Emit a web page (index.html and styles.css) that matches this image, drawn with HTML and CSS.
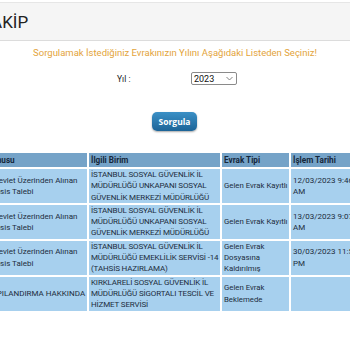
FILE: index.html
```html
<!DOCTYPE html>
<html lang="tr">
<head>
<meta charset="utf-8">
<link rel="stylesheet" href="styles.css">
</head>
<body>
<div class="page">
  <div class="titlebar"><h1 class="title">EVRAK TAKİP</h1></div>
  <p class="notice">Sorgulamak İstediğiniz Evrakınızın Yılını Aşağıdaki Listeden Seçiniz!</p>
  <div class="yearrow">
    <span class="yearlabel">Yıl :</span>
    <div class="select"><span>2023</span><svg class="chev" width="7" height="5" viewBox="0 0 7 5"><path d="M0.5 1 L3.5 4 L6.5 1" fill="none" stroke="#777" stroke-width="0.9"/></svg></div>
  </div>
  <div class="btnrow"><button class="btn">Sorgula</button></div>
  <table class="grid">
    <colgroup><col class="c1"><col class="c2"><col class="c3"><col class="c4"></colgroup>
    <thead>
      <tr><th>Konusu</th><th>İlgili Birim</th><th>Evrak Tipi</th><th>İşlem Tarihi</th></tr>
    </thead>
    <tbody>
      <tr><td>e-Devlet Üzerinden Alınan Tahsis Talebi</td><td class="unit">İSTANBUL SOSYAL GÜVENLİK İL MÜDÜRLÜĞÜ UNKAPANI SOSYAL GÜVENLİK MERKEZİ MÜDÜRLÜĞÜ</td><td class="type">Gelen Evrak Kayıtlı</td><td class="date">12/03/2023 9:46:12 AM</td></tr>
      <tr><td>e-Devlet Üzerinden Alınan Tahsis Talebi</td><td class="unit">İSTANBUL SOSYAL GÜVENLİK İL MÜDÜRLÜĞÜ UNKAPANI SOSYAL GÜVENLİK MERKEZİ MÜDÜRLÜĞÜ</td><td class="type">Gelen Evrak Kayıtlı</td><td class="date">13/03/2023 9:07:40 AM</td></tr>
      <tr><td>e-Devlet Üzerinden Alınan Tahsis Talebi</td><td class="unit">İSTANBUL SOSYAL GÜVENLİK İL MÜDÜRLÜĞÜ EMEKLİLİK SERVİSİ -14 (TAHSİS HAZIRLAMA)</td><td class="type">Gelen Evrak Dosyasına Kaldırılmış</td><td class="date">30/03/2023 11:52:08 PM</td></tr>
      <tr><td>YAPILANDIRMA HAKKINDA</td><td class="unit">KIRKLARELİ SOSYAL GÜVENLİK İL MÜDÜRLÜĞÜ SİGORTALI TESCİL VE HİZMET SERVİSİ</td><td class="type">Gelen Evrak Beklemede</td><td class="date"></td></tr>
    </tbody>
  </table>
</div>
</body>
</html>
```
FILE: styles.css
```css
html, body { margin: 0; padding: 0; background: #fff; overflow: hidden; }
body { font-family: Roboto, "Liberation Sans", sans-serif; color: #1d2b3a; }
.page { width: 500px; margin-left: -75px; padding-top: 2px; }
.titlebar {
  background: #f5f5f5;
  border-top: 1px solid #e6e6e6;
  border-bottom: 1px solid #dcdcdc;
  height: 37px;
  display: flex;
  align-items: center;
}
.title { margin: 0 0 0 0; font-size: 17px; font-weight: 400; color: #222; }
.notice { margin: 6px 0 0; text-align: center; font-size: 9.5px; color: #e3a43c; }
.yearrow { display: flex; align-items: center; margin-top: 14px; height: 13px; }
.yearlabel { margin-left: 192px; width: 74px; font-size: 8.5px; color: #222; }
.select {
  width: 39px; height: 11px; border: 1px solid #8a8a8a; border-radius: 2px;
  display: flex; align-items: center; justify-content: space-between;
  padding: 0 3px 0 2px; font-size: 9px; color: #111;
}
.chev { display: block; }
.btnrow { display: flex; justify-content: center; margin-top: 27px; }
.btn {
  width: 45px; height: 19px; border: none; border-radius: 5px;
  background: linear-gradient(#3b90c6, #1d6497);
  color: #fff; font-family: "Open Sans", Roboto, sans-serif; font-weight: 700; font-size: 8.5px;
  box-shadow: 0 1px 2px rgba(0,0,0,0.35); padding: 0; margin-left: -1px;
}
.grid {
  margin-top: 20px; margin-left: 58px;
  border-collapse: separate; border-spacing: 2px;
  table-layout: fixed; width: 396px;
  font-size: 8px;
}
.c1 { width: 102px; } .c2 { width: 131px; } .c3 { width: 67px; } .c4 { width: 86px; }
.grid th {
  background: #75a3c8; color: #15273a; text-align: left; font-weight: 700;
  padding: 0 2px; height: 14px; font-size: 8.2px; box-sizing: border-box; line-height: 14px;
}
.grid td {
  background: #a7d0ee; color: #1d2d3d; padding: 0 0 0 2px; height: 33px;
  vertical-align: middle; line-height: 11.3px; box-sizing: border-box;
}
.grid td.unit { letter-spacing: -0.15px; }
.grid td.type { font-size: 7.8px; }
```
